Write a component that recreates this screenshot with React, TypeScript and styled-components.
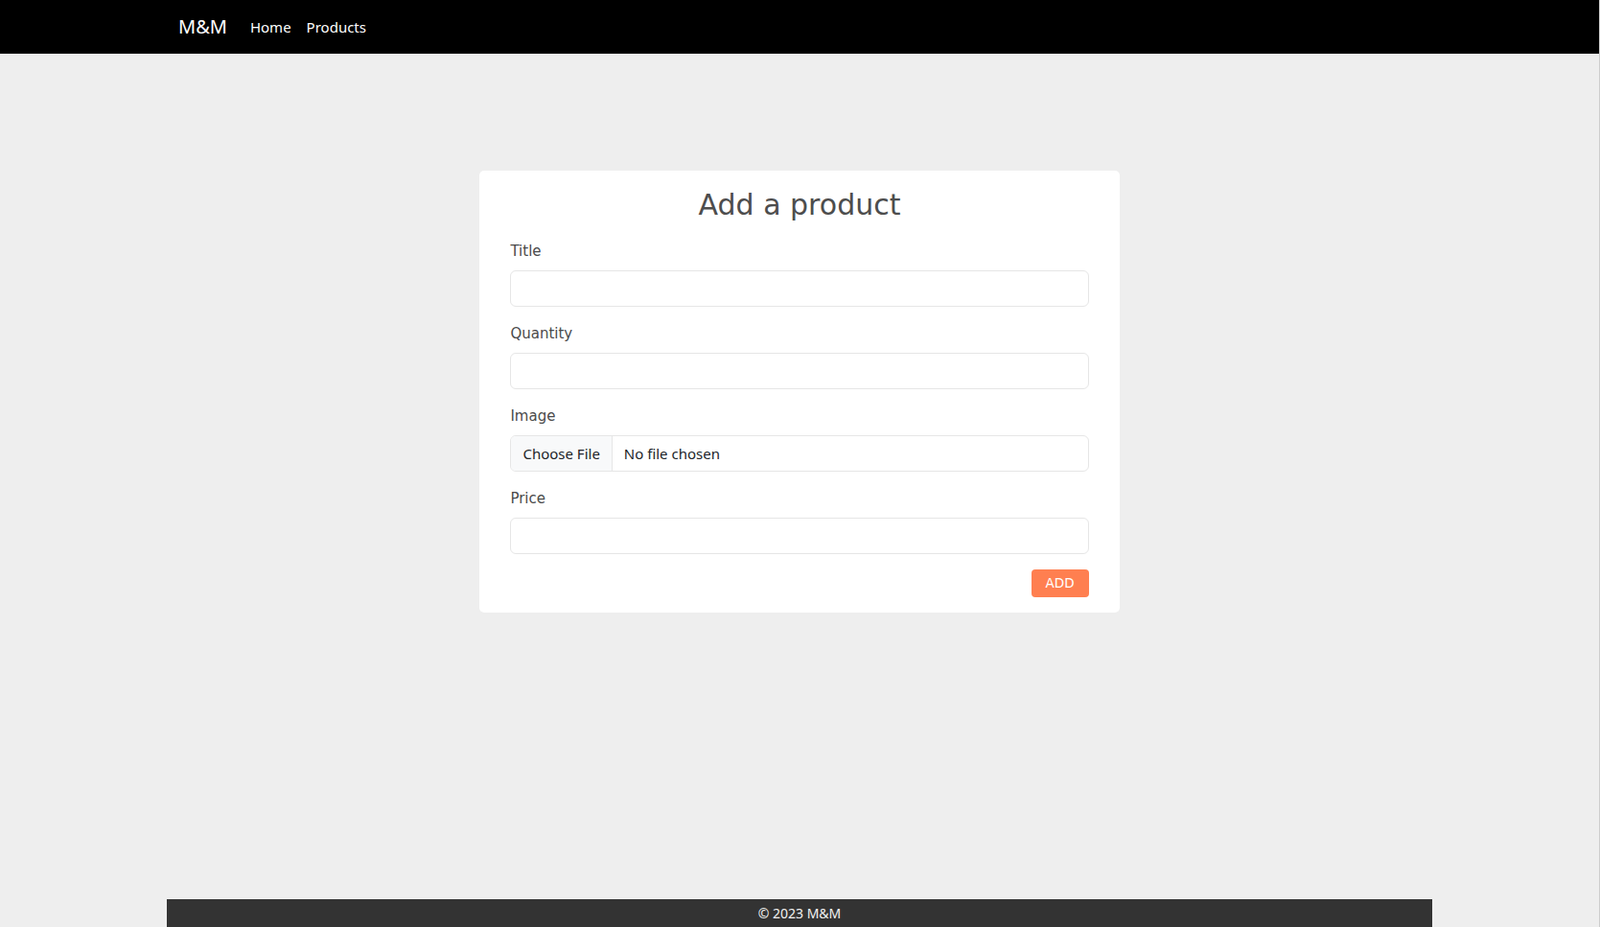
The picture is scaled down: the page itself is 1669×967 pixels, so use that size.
import styled, { createGlobalStyle } from "styled-components";

const GlobalStyle = createGlobalStyle`
  html, body {
    margin: 0;
    padding: 0;
  }
  body {
    background-color: #eeeeee;
    font-family: "Noto Sans", "Liberation Sans", sans-serif;
    color: #212529;
  }
  * {
    box-sizing: border-box;
  }
`;

const COMIC = `"Comic Sans MS", "DejaVu Sans", sans-serif`;

const fields = [
  { id: "title", label: "Title", type: "text" },
  { id: "quantity", label: "Quantity", type: "number" },
  { id: "image", label: "Image", type: "file" },
  { id: "price", label: "Price", type: "number" },
];

export default function App() {
  return (
    <>
      <GlobalStyle />
      <Page>
        <NavBar>
          <NavContainer>
            <Brand href="#">M&amp;M</Brand>
            <NavLinks>
              <NavLink href="#">Home</NavLink>
              <NavLink href="#">Products</NavLink>
            </NavLinks>
          </NavContainer>
        </NavBar>

        <Main>
          <Card>
            <Heading>Add a product</Heading>
            <form onSubmit={(e) => e.preventDefault()}>
              {fields.map((f) => (
                <FieldGroup key={f.id}>
                  <Label htmlFor={f.id}>{f.label}</Label>
                  {f.type === "file" ? (
                    <FileInput id={f.id} type="file" />
                  ) : (
                    <Input id={f.id} type={f.type} />
                  )}
                </FieldGroup>
              ))}
              <Actions>
                <AddButton type="submit">ADD</AddButton>
              </Actions>
            </form>
          </Card>
        </Main>

        <Footer>© 2023 M&amp;M</Footer>
      </Page>
    </>
  );
}

const Page = styled.div`
  min-height: 100vh;
  display: flex;
  flex-direction: column;
  border-right: 1px solid #cdcdcd;
`;

const NavBar = styled.nav`
  background-color: #000;
  height: 56px;
  display: flex;
  align-items: center;
`;

const NavContainer = styled.div`
  width: 100%;
  max-width: 1320px;
  margin: 0 auto;
  padding: 0 12px;
  display: flex;
  align-items: center;
`;

const Brand = styled.a`
  color: #fff;
  text-decoration: none;
  font-size: 20px;
  line-height: 30px;
  margin-right: 16px;
`;

const NavLinks = styled.div`
  display: flex;
  align-items: center;
`;

const NavLink = styled.a`
  color: #fff;
  text-decoration: none;
  font-size: 15px;
  line-height: 24px;
  padding: 8px 8px;
`;

const Main = styled.main`
  flex: 1;
  padding-top: 122px;
  display: flex;
  justify-content: center;
  align-items: flex-start;
`;

const Card = styled.div`
  width: 40%;
  background-color: #fff;
  border-radius: 5px;
  padding: 16px 32px;
  font-family: ${COMIC};
  color: #4a4a4a;
`;

const Heading = styled.h2`
  margin: 0 0 16px;
  text-align: center;
  font-size: 30px;
  font-weight: 400;
  line-height: 40px;
  color: #4d4d4d;
`;

const FieldGroup = styled.div`
  margin-bottom: 16px;
`;

const Label = styled.label`
  display: block;
  font-size: 15px;
  line-height: 24px;
  margin-bottom: 8px;
  color: #4a4a4a;
`;

const Input = styled.input`
  display: block;
  width: 100%;
  height: 38px;
  padding: 6px 12px;
  font-family: "Noto Sans", "Liberation Sans", sans-serif;
  font-size: 16px;
  color: #212529;
  background-color: #fff;
  border: 1px solid #e6e6e6;
  border-radius: 6px;
  outline: none;
  -moz-appearance: textfield;
  &::-webkit-outer-spin-button,
  &::-webkit-inner-spin-button {
    -webkit-appearance: none;
    margin: 0;
  }
`;

const FileInput = styled(Input)`
  overflow: hidden;
  line-height: 24px;
  font-size: 15px;
  &::file-selector-button {
    height: 38px;
    padding: 6px 12px;
    margin: -7px 12px -7px -12px;
    font-family: inherit;
    font-size: 15px;
    color: #212529;
    background-color: #f8f9fa;
    border: 0;
    border-right: 1px solid #e6e6e6;
    border-radius: 0;
  }
`;

const Actions = styled.div`
  display: flex;
  justify-content: flex-end;
`;

const AddButton = styled.button`
  font-family: ${COMIC};
  font-size: 13.5px;
  line-height: 21px;
  height: 29px;
  padding: 4px 15px;
  color: #fff;
  background-color: #ff7f50;
  border: none;
  border-radius: 4px;
  cursor: pointer;
`;

const Footer = styled.footer`
  width: 100%;
  max-width: 1320px;
  margin: 0 auto;
  padding: 4px 0;
  background-color: #333;
  color: #f2f2f2;
  text-align: center;
  font-size: 14px;
  line-height: 21px;
`;
